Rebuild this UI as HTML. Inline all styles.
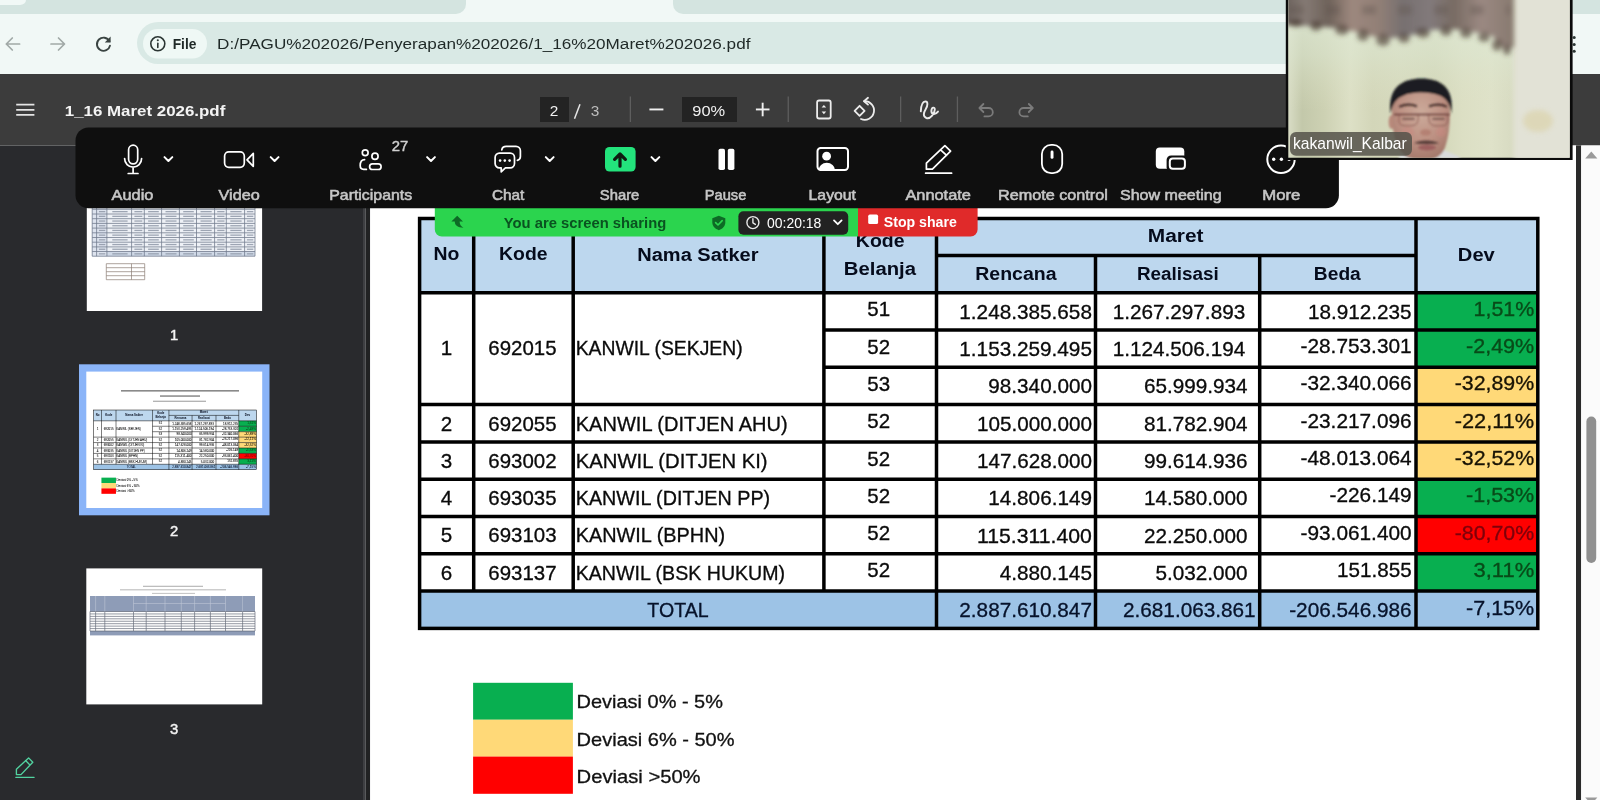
<!DOCTYPE html><html><head><meta charset="utf-8"><title>1_16 Maret 2026.pdf</title><style>html,body{margin:0;padding:0;background:#fff;overflow:hidden}svg{display:block;will-change:transform}text{font-family:"Liberation Sans", sans-serif;white-space:pre}</style></head><body>
<svg width="1600" height="800" viewBox="0 0 1600 800" font-family='"Liberation Sans", sans-serif'>
<defs><g id="tbl">
<rect x="419.6" y="218.5" width="1118.1999999999998" height="74.19999999999999" fill="#bdd7ee"/>
<rect x="419.6" y="591.0999999999999" width="1118.1999999999998" height="37.30000000000007" fill="#9dc3e6"/>
<rect x="1416.0" y="292.70" width="121.79999999999995" height="37.3" fill="#08af50"/>
<rect x="1416.0" y="330.00" width="121.79999999999995" height="37.3" fill="#08af50"/>
<rect x="1416.0" y="367.30" width="121.79999999999995" height="37.3" fill="#ffd978"/>
<rect x="1416.0" y="404.60" width="121.79999999999995" height="37.3" fill="#ffd978"/>
<rect x="1416.0" y="441.90" width="121.79999999999995" height="37.3" fill="#ffd978"/>
<rect x="1416.0" y="479.20" width="121.79999999999995" height="37.3" fill="#08af50"/>
<rect x="1416.0" y="516.50" width="121.79999999999995" height="37.3" fill="#ff0000"/>
<rect x="1416.0" y="553.80" width="121.79999999999995" height="37.3" fill="#08af50"/>
<g stroke="#000" stroke-width="3.5" stroke-linecap="butt" fill="none"><rect x="419.6" y="218.5" width="1118.1999999999998" height="409.90"/><path d="M419.6,292.7 H1537.8"/><path d="M936.5,255.4 H1416.0"/><path d="M473.7,218.5 V292.7"/><path d="M573.2,218.5 V292.7"/><path d="M823.9,218.5 V292.7"/><path d="M936.5,218.5 V292.7"/><path d="M1416.0,218.5 V292.7"/><path d="M1095.5,255.4 V292.7"/><path d="M1259.7,255.4 V292.7"/><path d="M473.7,292.7 V591.10"/><path d="M573.2,292.7 V591.10"/><path d="M823.9,292.7 V591.10"/><path d="M936.5,292.7 V628.40"/><path d="M1095.5,292.7 V628.40"/><path d="M1259.7,292.7 V628.40"/><path d="M1416.0,292.7 V628.40"/><path d="M823.9,330.00 H1537.8"/><path d="M823.9,367.30 H1537.8"/><path d="M419.6,404.60 H1537.8"/><path d="M419.6,441.90 H1537.8"/><path d="M419.6,479.20 H1537.8"/><path d="M419.6,516.50 H1537.8"/><path d="M419.6,553.80 H1537.8"/><path d="M419.6,591.10 H1537.8"/></g>
<text x="433.48" y="260.40" font-size="18.8" font-weight="bold" fill="#050b1c" textLength="25.88" lengthAdjust="spacingAndGlyphs">No</text>
<text x="499.08" y="260.40" font-size="18.8" font-weight="bold" fill="#050b1c" textLength="48.48" lengthAdjust="spacingAndGlyphs">Kode</text>
<text x="637.28" y="260.50" font-size="18.8" font-weight="bold" fill="#050b1c" textLength="121.28" lengthAdjust="spacingAndGlyphs">Nama Satker</text>
<text x="855.88" y="246.70" font-size="18.8" font-weight="bold" fill="#050b1c" textLength="48.68" lengthAdjust="spacingAndGlyphs">Kode</text>
<text x="843.88" y="274.60" font-size="18.8" font-weight="bold" fill="#050b1c" textLength="72.08" lengthAdjust="spacingAndGlyphs">Belanja</text>
<text x="1147.88" y="242.10" font-size="18.8" font-weight="bold" fill="#050b1c" textLength="55.68" lengthAdjust="spacingAndGlyphs">Maret</text>
<text x="975.28" y="280.00" font-size="18.8" font-weight="bold" fill="#050b1c" textLength="81.28" lengthAdjust="spacingAndGlyphs">Rencana</text>
<text x="1136.88" y="280.00" font-size="18.8" font-weight="bold" fill="#050b1c" textLength="81.88" lengthAdjust="spacingAndGlyphs">Realisasi</text>
<text x="1313.88" y="280.00" font-size="18.8" font-weight="bold" fill="#050b1c" textLength="46.88" lengthAdjust="spacingAndGlyphs">Beda</text>
<text x="1457.88" y="260.50" font-size="18.8" font-weight="bold" fill="#050b1c" textLength="36.88" lengthAdjust="spacingAndGlyphs">Dev</text>
<text x="440.65" y="355.00" font-size="21.0" font-weight="normal" fill="#0a0a0a" textLength="11.46" lengthAdjust="spacingAndGlyphs" stroke="#0a0a0a" stroke-width="0.32" paint-order="stroke">1</text>
<text x="488.35" y="355.00" font-size="21.0" font-weight="normal" fill="#0a0a0a" textLength="68.26" lengthAdjust="spacingAndGlyphs" stroke="#0a0a0a" stroke-width="0.32" paint-order="stroke">692015</text>
<text x="575.73" y="355.00" font-size="21.0" font-weight="normal" fill="#0a0a0a" textLength="166.90" lengthAdjust="spacingAndGlyphs" stroke="#0a0a0a" stroke-width="0.32" paint-order="stroke">KANWIL (SEKJEN)</text>
<text x="440.65" y="430.50" font-size="21.0" font-weight="normal" fill="#0a0a0a" textLength="11.46" lengthAdjust="spacingAndGlyphs" stroke="#0a0a0a" stroke-width="0.32" paint-order="stroke">2</text>
<text x="488.35" y="430.50" font-size="21.0" font-weight="normal" fill="#0a0a0a" textLength="68.26" lengthAdjust="spacingAndGlyphs" stroke="#0a0a0a" stroke-width="0.32" paint-order="stroke">692055</text>
<text x="575.73" y="430.50" font-size="21.0" font-weight="normal" fill="#0a0a0a" textLength="211.90" lengthAdjust="spacingAndGlyphs" stroke="#0a0a0a" stroke-width="0.32" paint-order="stroke">KANWIL (DITJEN AHU)</text>
<text x="440.65" y="467.80" font-size="21.0" font-weight="normal" fill="#0a0a0a" textLength="11.46" lengthAdjust="spacingAndGlyphs" stroke="#0a0a0a" stroke-width="0.32" paint-order="stroke">3</text>
<text x="488.35" y="467.80" font-size="21.0" font-weight="normal" fill="#0a0a0a" textLength="68.26" lengthAdjust="spacingAndGlyphs" stroke="#0a0a0a" stroke-width="0.32" paint-order="stroke">693002</text>
<text x="575.73" y="467.80" font-size="21.0" font-weight="normal" fill="#0a0a0a" textLength="191.90" lengthAdjust="spacingAndGlyphs" stroke="#0a0a0a" stroke-width="0.32" paint-order="stroke">KANWIL (DITJEN KI)</text>
<text x="440.65" y="505.10" font-size="21.0" font-weight="normal" fill="#0a0a0a" textLength="11.46" lengthAdjust="spacingAndGlyphs" stroke="#0a0a0a" stroke-width="0.32" paint-order="stroke">4</text>
<text x="488.35" y="505.10" font-size="21.0" font-weight="normal" fill="#0a0a0a" textLength="68.26" lengthAdjust="spacingAndGlyphs" stroke="#0a0a0a" stroke-width="0.32" paint-order="stroke">693035</text>
<text x="575.73" y="505.10" font-size="21.0" font-weight="normal" fill="#0a0a0a" textLength="194.40" lengthAdjust="spacingAndGlyphs" stroke="#0a0a0a" stroke-width="0.32" paint-order="stroke">KANWIL (DITJEN PP)</text>
<text x="440.65" y="542.40" font-size="21.0" font-weight="normal" fill="#0a0a0a" textLength="11.46" lengthAdjust="spacingAndGlyphs" stroke="#0a0a0a" stroke-width="0.32" paint-order="stroke">5</text>
<text x="488.35" y="542.40" font-size="21.0" font-weight="normal" fill="#0a0a0a" textLength="68.26" lengthAdjust="spacingAndGlyphs" stroke="#0a0a0a" stroke-width="0.32" paint-order="stroke">693103</text>
<text x="575.73" y="542.40" font-size="21.0" font-weight="normal" fill="#0a0a0a" textLength="149.40" lengthAdjust="spacingAndGlyphs" stroke="#0a0a0a" stroke-width="0.32" paint-order="stroke">KANWIL (BPHN)</text>
<text x="440.65" y="579.70" font-size="21.0" font-weight="normal" fill="#0a0a0a" textLength="11.46" lengthAdjust="spacingAndGlyphs" stroke="#0a0a0a" stroke-width="0.32" paint-order="stroke">6</text>
<text x="488.35" y="579.70" font-size="21.0" font-weight="normal" fill="#0a0a0a" textLength="68.26" lengthAdjust="spacingAndGlyphs" stroke="#0a0a0a" stroke-width="0.32" paint-order="stroke">693137</text>
<text x="575.73" y="579.70" font-size="21.0" font-weight="normal" fill="#0a0a0a" textLength="209.40" lengthAdjust="spacingAndGlyphs" stroke="#0a0a0a" stroke-width="0.32" paint-order="stroke">KANWIL (BSK HUKUM)</text>
<text x="647.33" y="617.10" font-size="21.0" font-weight="normal" fill="#06122a" textLength="61.30" lengthAdjust="spacingAndGlyphs" stroke="#06122a" stroke-width="0.32" paint-order="stroke">TOTAL</text>
<text x="867.37" y="316.30" font-size="21.0" font-weight="normal" fill="#0a0a0a" textLength="22.82" lengthAdjust="spacingAndGlyphs" stroke="#0a0a0a" stroke-width="0.32" paint-order="stroke">51</text>
<text x="959.33" y="318.70" font-size="21.0" font-weight="normal" fill="#0a0a0a" textLength="132.60" lengthAdjust="spacingAndGlyphs" stroke="#0a0a0a" stroke-width="0.32" paint-order="stroke">1.248.385.658</text>
<text x="1112.63" y="318.70" font-size="21.0" font-weight="normal" fill="#0a0a0a" textLength="132.60" lengthAdjust="spacingAndGlyphs" stroke="#0a0a0a" stroke-width="0.32" paint-order="stroke">1.267.297.893</text>
<text x="1308.05" y="318.50" font-size="21.0" font-weight="normal" fill="#0a0a0a" textLength="103.58" lengthAdjust="spacingAndGlyphs" stroke="#0a0a0a" stroke-width="0.32" paint-order="stroke">18.912.235</text>
<text x="1473.55" y="316.10" font-size="21.0" font-weight="normal" fill="#084a18" textLength="60.68" lengthAdjust="spacingAndGlyphs" stroke="#084a18" stroke-width="0.32" paint-order="stroke">1,51%</text>
<text x="867.37" y="353.60" font-size="21.0" font-weight="normal" fill="#0a0a0a" textLength="22.82" lengthAdjust="spacingAndGlyphs" stroke="#0a0a0a" stroke-width="0.32" paint-order="stroke">52</text>
<text x="959.33" y="356.00" font-size="21.0" font-weight="normal" fill="#0a0a0a" textLength="132.60" lengthAdjust="spacingAndGlyphs" stroke="#0a0a0a" stroke-width="0.32" paint-order="stroke">1.153.259.495</text>
<text x="1112.63" y="356.00" font-size="21.0" font-weight="normal" fill="#0a0a0a" textLength="132.60" lengthAdjust="spacingAndGlyphs" stroke="#0a0a0a" stroke-width="0.32" paint-order="stroke">1.124.506.194</text>
<text x="1300.55" y="353.10" font-size="21.0" font-weight="normal" fill="#0a0a0a" textLength="111.08" lengthAdjust="spacingAndGlyphs" stroke="#0a0a0a" stroke-width="0.32" paint-order="stroke">-28.753.301</text>
<text x="1466.05" y="353.10" font-size="21.0" font-weight="normal" fill="#084a18" textLength="68.18" lengthAdjust="spacingAndGlyphs" stroke="#084a18" stroke-width="0.32" paint-order="stroke">-2,49%</text>
<text x="867.37" y="390.90" font-size="21.0" font-weight="normal" fill="#0a0a0a" textLength="22.82" lengthAdjust="spacingAndGlyphs" stroke="#0a0a0a" stroke-width="0.32" paint-order="stroke">53</text>
<text x="988.35" y="393.30" font-size="21.0" font-weight="normal" fill="#0a0a0a" textLength="103.58" lengthAdjust="spacingAndGlyphs" stroke="#0a0a0a" stroke-width="0.32" paint-order="stroke">98.340.000</text>
<text x="1144.05" y="393.30" font-size="21.0" font-weight="normal" fill="#0a0a0a" textLength="103.58" lengthAdjust="spacingAndGlyphs" stroke="#0a0a0a" stroke-width="0.32" paint-order="stroke">65.999.934</text>
<text x="1300.55" y="390.40" font-size="21.0" font-weight="normal" fill="#0a0a0a" textLength="111.08" lengthAdjust="spacingAndGlyphs" stroke="#0a0a0a" stroke-width="0.32" paint-order="stroke">-32.340.066</text>
<text x="1454.69" y="390.40" font-size="21.0" font-weight="normal" fill="#171204" textLength="79.54" lengthAdjust="spacingAndGlyphs" stroke="#171204" stroke-width="0.32" paint-order="stroke">-32,89%</text>
<text x="867.37" y="428.20" font-size="21.0" font-weight="normal" fill="#0a0a0a" textLength="22.82" lengthAdjust="spacingAndGlyphs" stroke="#0a0a0a" stroke-width="0.32" paint-order="stroke">52</text>
<text x="976.99" y="430.60" font-size="21.0" font-weight="normal" fill="#0a0a0a" textLength="114.94" lengthAdjust="spacingAndGlyphs" stroke="#0a0a0a" stroke-width="0.32" paint-order="stroke">105.000.000</text>
<text x="1144.05" y="430.60" font-size="21.0" font-weight="normal" fill="#0a0a0a" textLength="103.58" lengthAdjust="spacingAndGlyphs" stroke="#0a0a0a" stroke-width="0.32" paint-order="stroke">81.782.904</text>
<text x="1300.55" y="427.70" font-size="21.0" font-weight="normal" fill="#0a0a0a" textLength="111.08" lengthAdjust="spacingAndGlyphs" stroke="#0a0a0a" stroke-width="0.32" paint-order="stroke">-23.217.096</text>
<text x="1454.69" y="427.70" font-size="21.0" font-weight="normal" fill="#171204" textLength="79.54" lengthAdjust="spacingAndGlyphs" stroke="#171204" stroke-width="0.32" paint-order="stroke">-22,11%</text>
<text x="867.37" y="465.50" font-size="21.0" font-weight="normal" fill="#0a0a0a" textLength="22.82" lengthAdjust="spacingAndGlyphs" stroke="#0a0a0a" stroke-width="0.32" paint-order="stroke">52</text>
<text x="976.99" y="467.90" font-size="21.0" font-weight="normal" fill="#0a0a0a" textLength="114.94" lengthAdjust="spacingAndGlyphs" stroke="#0a0a0a" stroke-width="0.32" paint-order="stroke">147.628.000</text>
<text x="1144.05" y="467.90" font-size="21.0" font-weight="normal" fill="#0a0a0a" textLength="103.58" lengthAdjust="spacingAndGlyphs" stroke="#0a0a0a" stroke-width="0.32" paint-order="stroke">99.614.936</text>
<text x="1300.55" y="465.00" font-size="21.0" font-weight="normal" fill="#0a0a0a" textLength="111.08" lengthAdjust="spacingAndGlyphs" stroke="#0a0a0a" stroke-width="0.32" paint-order="stroke">-48.013.064</text>
<text x="1454.69" y="465.00" font-size="21.0" font-weight="normal" fill="#171204" textLength="79.54" lengthAdjust="spacingAndGlyphs" stroke="#171204" stroke-width="0.32" paint-order="stroke">-32,52%</text>
<text x="867.37" y="502.80" font-size="21.0" font-weight="normal" fill="#0a0a0a" textLength="22.82" lengthAdjust="spacingAndGlyphs" stroke="#0a0a0a" stroke-width="0.32" paint-order="stroke">52</text>
<text x="988.35" y="505.20" font-size="21.0" font-weight="normal" fill="#0a0a0a" textLength="103.58" lengthAdjust="spacingAndGlyphs" stroke="#0a0a0a" stroke-width="0.32" paint-order="stroke">14.806.149</text>
<text x="1144.05" y="505.20" font-size="21.0" font-weight="normal" fill="#0a0a0a" textLength="103.58" lengthAdjust="spacingAndGlyphs" stroke="#0a0a0a" stroke-width="0.32" paint-order="stroke">14.580.000</text>
<text x="1329.57" y="502.30" font-size="21.0" font-weight="normal" fill="#0a0a0a" textLength="82.06" lengthAdjust="spacingAndGlyphs" stroke="#0a0a0a" stroke-width="0.32" paint-order="stroke">-226.149</text>
<text x="1466.05" y="502.30" font-size="21.0" font-weight="normal" fill="#084a18" textLength="68.18" lengthAdjust="spacingAndGlyphs" stroke="#084a18" stroke-width="0.32" paint-order="stroke">-1,53%</text>
<text x="867.37" y="540.10" font-size="21.0" font-weight="normal" fill="#0a0a0a" textLength="22.82" lengthAdjust="spacingAndGlyphs" stroke="#0a0a0a" stroke-width="0.32" paint-order="stroke">52</text>
<text x="976.99" y="542.50" font-size="21.0" font-weight="normal" fill="#0a0a0a" textLength="114.94" lengthAdjust="spacingAndGlyphs" stroke="#0a0a0a" stroke-width="0.32" paint-order="stroke">115.311.400</text>
<text x="1144.05" y="542.50" font-size="21.0" font-weight="normal" fill="#0a0a0a" textLength="103.58" lengthAdjust="spacingAndGlyphs" stroke="#0a0a0a" stroke-width="0.32" paint-order="stroke">22.250.000</text>
<text x="1300.55" y="539.60" font-size="21.0" font-weight="normal" fill="#0a0a0a" textLength="111.08" lengthAdjust="spacingAndGlyphs" stroke="#0a0a0a" stroke-width="0.32" paint-order="stroke">-93.061.400</text>
<text x="1454.69" y="539.60" font-size="21.0" font-weight="normal" fill="#7e000a" textLength="79.54" lengthAdjust="spacingAndGlyphs" stroke="#7e000a" stroke-width="0.32" paint-order="stroke">-80,70%</text>
<text x="867.37" y="577.40" font-size="21.0" font-weight="normal" fill="#0a0a0a" textLength="22.82" lengthAdjust="spacingAndGlyphs" stroke="#0a0a0a" stroke-width="0.32" paint-order="stroke">52</text>
<text x="999.71" y="579.80" font-size="21.0" font-weight="normal" fill="#0a0a0a" textLength="92.22" lengthAdjust="spacingAndGlyphs" stroke="#0a0a0a" stroke-width="0.32" paint-order="stroke">4.880.145</text>
<text x="1155.41" y="579.80" font-size="21.0" font-weight="normal" fill="#0a0a0a" textLength="92.22" lengthAdjust="spacingAndGlyphs" stroke="#0a0a0a" stroke-width="0.32" paint-order="stroke">5.032.000</text>
<text x="1337.07" y="576.90" font-size="21.0" font-weight="normal" fill="#0a0a0a" textLength="74.56" lengthAdjust="spacingAndGlyphs" stroke="#0a0a0a" stroke-width="0.32" paint-order="stroke">151.855</text>
<text x="1473.55" y="576.90" font-size="21.0" font-weight="normal" fill="#084a18" textLength="60.68" lengthAdjust="spacingAndGlyphs" stroke="#084a18" stroke-width="0.32" paint-order="stroke">3,11%</text>
<text x="959.33" y="617.30" font-size="21.0" font-weight="normal" fill="#06122a" textLength="132.60" lengthAdjust="spacingAndGlyphs" stroke="#06122a" stroke-width="0.32" paint-order="stroke">2.887.610.847</text>
<text x="1123.03" y="617.30" font-size="21.0" font-weight="normal" fill="#06122a" textLength="132.60" lengthAdjust="spacingAndGlyphs" stroke="#06122a" stroke-width="0.32" paint-order="stroke">2.681.063.861</text>
<text x="1289.19" y="617.30" font-size="21.0" font-weight="normal" fill="#06122a" textLength="122.44" lengthAdjust="spacingAndGlyphs" stroke="#06122a" stroke-width="0.32" paint-order="stroke">-206.546.986</text>
<text x="1466.05" y="614.50" font-size="21.0" font-weight="normal" fill="#06122a" textLength="68.18" lengthAdjust="spacingAndGlyphs" stroke="#06122a" stroke-width="0.32" paint-order="stroke">-7,15%</text>
<rect x="473.1" y="682.8" width="99.8" height="37" fill="#08af50"/>
<rect x="473.1" y="719.7" width="99.8" height="37" fill="#ffd978"/>
<rect x="473.1" y="756.6" width="99.8" height="37.2" fill="#ff0000"/>
<text x="576.63" y="708.40" font-size="18.2" font-weight="normal" fill="#111" textLength="146.32" lengthAdjust="spacingAndGlyphs" stroke="#111" stroke-width="0.3" paint-order="stroke">Deviasi 0% - 5%</text>
<text x="576.63" y="746.00" font-size="18.2" font-weight="normal" fill="#111" textLength="157.92" lengthAdjust="spacingAndGlyphs" stroke="#111" stroke-width="0.3" paint-order="stroke">Deviasi 6% - 50%</text>
<text x="576.63" y="782.90" font-size="18.2" font-weight="normal" fill="#111" textLength="123.92" lengthAdjust="spacingAndGlyphs" stroke="#111" stroke-width="0.3" paint-order="stroke">Deviasi &gt;50%</text>
</g></defs>
<rect x="0" y="0" width="1600" height="800" fill="#fff"/>
<rect x="0" y="0" width="1600" height="74" fill="#f1f8f6"/>
<path d="M0,0 H466 V4 A10,10 0 0 1 456,14 H0 Z" fill="#d4e4e0"/>
<path d="M673,0 H1600 V14 H683 A10,10 0 0 1 673,4 Z" fill="#d4e4e0"/>
<path d="M0,0 H26 V0 A6,5 0 0 1 20,5 H0 Z" fill="#f1f8f6"/>
<rect x="137" y="22" width="1425" height="42" rx="21" fill="#d9e9e5"/>
<rect x="143" y="29" width="64" height="29.5" rx="14.7" fill="#eff8f5"/>
<g fill="none" stroke="#2b3533" stroke-width="1.6" stroke-linecap="round"><circle cx="157.8" cy="43.8" r="7"/><path d="M157.8,43.2 V47.4"/></g><circle cx="157.8" cy="40.3" r="1.05" fill="#2b3533"/>
<text x="172.68" y="48.90" font-size="14.6" font-weight="bold" fill="#1f2927" textLength="23.76" lengthAdjust="spacingAndGlyphs">File</text>
<text x="217.12" y="49.00" font-size="15.4" font-weight="normal" fill="#1f2927" textLength="533.34" lengthAdjust="spacingAndGlyphs">D:/PAGU%202026/Penyerapan%202026/1_16%20Maret%202026.pdf</text>
<g fill="#2b3533"><circle cx="1574.2" cy="37.6" r="1.5"/><circle cx="1574.2" cy="44.5" r="1.5"/><circle cx="1574.2" cy="51.3" r="1.5"/></g>
<g fill="none" stroke="#a1a9a7" stroke-width="1.7" stroke-linecap="round" stroke-linejoin="round"><path d="M19.6,44 H6.4 M12.3,38 L6.3,44 L12.3,50"/><path d="M51,44 H64.4 M58.5,38 L64.5,44 L58.5,50"/></g>
<g fill="none" stroke="#3a4442" stroke-width="1.9" stroke-linecap="round" stroke-linejoin="round"><path d="M109.4,41.2 A6.6,6.6 0 1 0 110,45.6"/></g><path d="M110.6,36.6 V42.4 H104.8 Z" fill="#3a4442"/>
<rect x="0" y="74" width="1600" height="71.5" fill="#3c3c3c"/>
<g stroke="#e4e4e4" stroke-width="1.7"><path d="M16.2,104.6 H34.4 M16.2,109.8 H34.4 M16.2,114.8 H34.4"/></g>
<text x="64.74" y="116.30" font-size="15.2" font-weight="bold" fill="#f4f4f4" textLength="160.52" lengthAdjust="spacingAndGlyphs">1_16 Maret 2026.pdf</text>
<rect x="540" y="97" width="29" height="25" fill="#232323"/>
<text x="554.00" y="116.00" font-size="15.4" font-weight="normal" fill="#f1f1f1" text-anchor="middle">2</text>
<path d="M574.5,118.8 L580,104.2" stroke="#e6e6e6" stroke-width="1.5" fill="none"/>
<text x="595.00" y="116.00" font-size="15.4" font-weight="normal" fill="#bdbdbd" text-anchor="middle">3</text>
<rect x="629.6999999999999" y="96.5" width="1.3" height="25.5" fill="#5e5e5e"/>
<rect x="787.6" y="96.5" width="1.3" height="25.5" fill="#5e5e5e"/>
<rect x="900.0" y="96.5" width="1.3" height="25.5" fill="#5e5e5e"/>
<rect x="956.8" y="96.5" width="1.3" height="25.5" fill="#5e5e5e"/>
<rect x="649.4" y="108.5" width="14" height="1.9" fill="#efefef"/>
<rect x="682" y="97" width="55" height="25" fill="#232323"/>
<text x="692.35" y="116.00" font-size="15" font-weight="normal" fill="#f1f1f1" textLength="32.90" lengthAdjust="spacingAndGlyphs">90%</text>
<rect x="755.9" y="108.5" width="13.6" height="1.9" fill="#efefef"/><rect x="761.7" y="102.7" width="1.9" height="13.6" fill="#efefef"/>
<g fill="none" stroke="#ececec" stroke-width="1.8" stroke-linejoin="round"><rect x="817.1" y="100.5" width="13.6" height="18" rx="2"/></g><path d="M821.6,107.6 L823.9,105 L826.2,107.6 Z M821.6,111.6 L823.9,114.2 L826.2,111.6 Z" fill="#ececec"/>
<g fill="none" stroke="#ececec" stroke-width="1.8" stroke-linejoin="round" stroke-linecap="round"><path d="M854.6,110.8 L859.6,105.8 L864.6,110.8 L859.6,115.8 Z"/><path d="M864.2,101.2 A9.3,9.3 0 1 1 861,119"/><path d="M868,97.8 L864,101.2 L868,104.6"/></g>
<path d="M920.8,111.4 C921,106 922.6,101.6 925.4,101.4 C928.2,101.4 927.8,105.6 925.8,109 C923.6,112.6 922.6,116.6 926.4,118 C930.6,119.4 934.6,112.8 934.8,109.6 C935,106.8 931.8,107 931.4,110.4 C931,113.8 934.4,116 938,111.6" fill="none" stroke="#ececec" stroke-width="1.9" stroke-linecap="round"/>
<g fill="none" stroke="#7b7b7b" stroke-width="1.8" stroke-linejoin="round" stroke-linecap="round"><path d="M983.4,104 L979.4,108 L983.4,112 M979.6,108 H988.6 A4.2,4.2 0 0 1 988.6,116.4 H984.4"/><path d="M1028.8,104 L1032.8,108 L1028.8,112 M1032.6,108 H1023.6 A4.2,4.2 0 0 0 1023.6,116.4 H1027.8"/></g>
<rect x="0" y="145.5" width="363" height="655" fill="#292a2d"/>
<rect x="363" y="145.5" width="2.4" height="655" fill="#3e3f42"/>
<rect x="365.4" y="145.5" width="4.8" height="655" fill="#212223"/>
<rect x="86.8" y="170" width="175.3" height="141" fill="#fff"/>
<rect x="92.2" y="200" width="162.8" height="56.2" fill="#eef1f6"/>
<rect x="92.2" y="251.5" width="162.8" height="4.7" fill="#cfd8e6"/>
<rect x="92.2" y="200" width="14.7" height="56.2" fill="#dde3ee"/>
<g fill="#8a93a3" opacity="0.8"><rect x="98.9" y="211.0" width="6.4" height="1.3"/><rect x="112.3" y="211.0" width="15.3" height="1.3"/><rect x="134.4" y="211.0" width="7.9" height="1.3"/><rect x="148.1" y="211.0" width="10.7" height="1.3"/><rect x="165.5" y="211.0" width="11.0" height="1.3"/><rect x="183.2" y="211.0" width="10.6" height="1.3"/><rect x="200.5" y="211.0" width="11.2" height="1.3"/><rect x="217.2" y="211.0" width="7.3" height="1.3"/><rect x="230.3" y="211.0" width="11.3" height="1.3"/><rect x="246.9" y="211.0" width="6.4" height="1.3"/><rect x="98.9" y="215.7" width="6.4" height="1.3"/><rect x="112.3" y="215.7" width="15.3" height="1.3"/><rect x="134.4" y="215.7" width="7.9" height="1.3"/><rect x="148.1" y="215.7" width="10.7" height="1.3"/><rect x="165.5" y="215.7" width="11.0" height="1.3"/><rect x="183.2" y="215.7" width="10.6" height="1.3"/><rect x="200.5" y="215.7" width="11.2" height="1.3"/><rect x="217.2" y="215.7" width="7.3" height="1.3"/><rect x="230.3" y="215.7" width="11.3" height="1.3"/><rect x="246.9" y="215.7" width="6.4" height="1.3"/><rect x="98.9" y="220.4" width="6.4" height="1.3"/><rect x="112.3" y="220.4" width="15.3" height="1.3"/><rect x="134.4" y="220.4" width="7.9" height="1.3"/><rect x="148.1" y="220.4" width="10.7" height="1.3"/><rect x="165.5" y="220.4" width="11.0" height="1.3"/><rect x="183.2" y="220.4" width="10.6" height="1.3"/><rect x="200.5" y="220.4" width="11.2" height="1.3"/><rect x="217.2" y="220.4" width="7.3" height="1.3"/><rect x="230.3" y="220.4" width="11.3" height="1.3"/><rect x="246.9" y="220.4" width="6.4" height="1.3"/><rect x="98.9" y="225.1" width="6.4" height="1.3"/><rect x="112.3" y="225.1" width="15.3" height="1.3"/><rect x="134.4" y="225.1" width="7.9" height="1.3"/><rect x="148.1" y="225.1" width="10.7" height="1.3"/><rect x="165.5" y="225.1" width="11.0" height="1.3"/><rect x="183.2" y="225.1" width="10.6" height="1.3"/><rect x="200.5" y="225.1" width="11.2" height="1.3"/><rect x="217.2" y="225.1" width="7.3" height="1.3"/><rect x="230.3" y="225.1" width="11.3" height="1.3"/><rect x="246.9" y="225.1" width="6.4" height="1.3"/><rect x="98.9" y="229.8" width="6.4" height="1.3"/><rect x="112.3" y="229.8" width="15.3" height="1.3"/><rect x="134.4" y="229.8" width="7.9" height="1.3"/><rect x="148.1" y="229.8" width="10.7" height="1.3"/><rect x="165.5" y="229.8" width="11.0" height="1.3"/><rect x="183.2" y="229.8" width="10.6" height="1.3"/><rect x="200.5" y="229.8" width="11.2" height="1.3"/><rect x="217.2" y="229.8" width="7.3" height="1.3"/><rect x="230.3" y="229.8" width="11.3" height="1.3"/><rect x="246.9" y="229.8" width="6.4" height="1.3"/><rect x="98.9" y="234.5" width="6.4" height="1.3"/><rect x="112.3" y="234.5" width="15.3" height="1.3"/><rect x="134.4" y="234.5" width="7.9" height="1.3"/><rect x="148.1" y="234.5" width="10.7" height="1.3"/><rect x="165.5" y="234.5" width="11.0" height="1.3"/><rect x="183.2" y="234.5" width="10.6" height="1.3"/><rect x="200.5" y="234.5" width="11.2" height="1.3"/><rect x="217.2" y="234.5" width="7.3" height="1.3"/><rect x="230.3" y="234.5" width="11.3" height="1.3"/><rect x="246.9" y="234.5" width="6.4" height="1.3"/><rect x="98.9" y="239.2" width="6.4" height="1.3"/><rect x="112.3" y="239.2" width="15.3" height="1.3"/><rect x="134.4" y="239.2" width="7.9" height="1.3"/><rect x="148.1" y="239.2" width="10.7" height="1.3"/><rect x="165.5" y="239.2" width="11.0" height="1.3"/><rect x="183.2" y="239.2" width="10.6" height="1.3"/><rect x="200.5" y="239.2" width="11.2" height="1.3"/><rect x="217.2" y="239.2" width="7.3" height="1.3"/><rect x="230.3" y="239.2" width="11.3" height="1.3"/><rect x="246.9" y="239.2" width="6.4" height="1.3"/><rect x="98.9" y="243.9" width="6.4" height="1.3"/><rect x="112.3" y="243.9" width="15.3" height="1.3"/><rect x="134.4" y="243.9" width="7.9" height="1.3"/><rect x="148.1" y="243.9" width="10.7" height="1.3"/><rect x="165.5" y="243.9" width="11.0" height="1.3"/><rect x="183.2" y="243.9" width="10.6" height="1.3"/><rect x="200.5" y="243.9" width="11.2" height="1.3"/><rect x="217.2" y="243.9" width="7.3" height="1.3"/><rect x="230.3" y="243.9" width="11.3" height="1.3"/><rect x="246.9" y="243.9" width="6.4" height="1.3"/><rect x="98.9" y="248.6" width="6.4" height="1.3"/><rect x="112.3" y="248.6" width="15.3" height="1.3"/><rect x="134.4" y="248.6" width="7.9" height="1.3"/><rect x="148.1" y="248.6" width="10.7" height="1.3"/><rect x="165.5" y="248.6" width="11.0" height="1.3"/><rect x="183.2" y="248.6" width="10.6" height="1.3"/><rect x="200.5" y="248.6" width="11.2" height="1.3"/><rect x="217.2" y="248.6" width="7.3" height="1.3"/><rect x="230.3" y="248.6" width="11.3" height="1.3"/><rect x="246.9" y="248.6" width="6.4" height="1.3"/><rect x="98.9" y="253.2" width="6.4" height="1.3"/><rect x="112.3" y="253.2" width="15.3" height="1.3"/><rect x="134.4" y="253.2" width="7.9" height="1.3"/><rect x="148.1" y="253.2" width="10.7" height="1.3"/><rect x="165.5" y="253.2" width="11.0" height="1.3"/><rect x="183.2" y="253.2" width="10.6" height="1.3"/><rect x="200.5" y="253.2" width="11.2" height="1.3"/><rect x="217.2" y="253.2" width="7.3" height="1.3"/><rect x="230.3" y="253.2" width="11.3" height="1.3"/><rect x="246.9" y="253.2" width="6.4" height="1.3"/></g>
<g stroke="#5f6a7d" stroke-width="0.8" opacity="0.85"><path d="M92.2,200 V256.2"/><path d="M96.6,200 V256.2"/><path d="M106.9,200 V256.2"/><path d="M131.6,200 V256.2"/><path d="M144.3,200 V256.2"/><path d="M161.6,200 V256.2"/><path d="M179.4,200 V256.2"/><path d="M196.5,200 V256.2"/><path d="M214.6,200 V256.2"/><path d="M226.3,200 V256.2"/><path d="M244.6,200 V256.2"/><path d="M255,200 V256.2"/><path d="M92.2,209.3 H255"/><path d="M92.2,214 H255"/><path d="M92.2,218.7 H255"/><path d="M92.2,223.4 H255"/><path d="M92.2,228.1 H255"/><path d="M92.2,232.8 H255"/><path d="M92.2,237.5 H255"/><path d="M92.2,242.2 H255"/><path d="M92.2,246.9 H255"/><path d="M92.2,251.5 H255"/><path d="M92.2,256.2 H255"/></g>
<g stroke="#8b7d74" stroke-width="0.7" fill="none"><path d="M106.3,263.7 H144.7 M106.3,267.7 H144.7 M106.3,271.7 H144.7 M106.3,275.7 H144.7 M106.3,279.7 H144.7 M106.3,263.7 V279.7 M131.5,263.7 V279.7 M144.7,263.7 V279.7"/></g>
<text x="174.00" y="339.60" font-size="14.8" font-weight="normal" fill="#f4f4f4" text-anchor="middle" stroke="#f4f4f4" stroke-width="0.45">1</text>
<rect x="79" y="364.3" width="190.5" height="151" fill="#8ab4f8"/>
<rect x="86.3" y="371.6" width="175.9" height="136.4" fill="#fff"/>
<g fill="#555"><rect x="121" y="390.2" width="118" height="1.3" opacity=".85"/><rect x="160" y="395.4" width="40" height="1.3" opacity=".8"/><rect x="153" y="400.7" width="53" height="1.1" opacity=".55"/></g>
<use href="#tbl" transform="translate(32.518,378.194) scale(0.14565)"/>
<text x="174.00" y="536.40" font-size="14.8" font-weight="normal" fill="#f4f4f4" text-anchor="middle" stroke="#f4f4f4" stroke-width="0.45">2</text>
<rect x="86.3" y="568.4" width="175.9" height="136" fill="#fff"/>
<g fill="#777"><rect x="143" y="585.8" width="60" height="0.9" opacity=".7"/><rect x="120" y="589.4" width="106" height="0.9" opacity=".6"/><rect x="152" y="592.9" width="43" height="0.9" opacity=".5"/></g>
<rect x="90" y="596" width="165" height="15.5" fill="#8e9cb7"/>
<rect x="90" y="631" width="165" height="4.4" fill="#8e9cb7"/>
<g stroke="#4e5564" stroke-width="0.7" opacity=".85"><path d="M90,611.5 V631"/><path d="M95.6,611.5 V631"/><path d="M104.8,611.5 V631"/><path d="M133.5,611.5 V631"/><path d="M146.2,611.5 V631"/><path d="M165,611.5 V631"/><path d="M181.3,611.5 V631"/><path d="M194.6,611.5 V631"/><path d="M210.4,611.5 V631"/><path d="M225.5,611.5 V631"/><path d="M242.6,611.5 V631"/><path d="M255,611.5 V631"/><path d="M90,611.50 H255"/><path d="M90,613.94 H255"/><path d="M90,616.38 H255"/><path d="M90,618.82 H255"/><path d="M90,621.26 H255"/><path d="M90,623.70 H255"/><path d="M90,626.14 H255"/><path d="M90,628.58 H255"/><path d="M90,631.02 H255"/></g><g stroke="#c9d0de" stroke-width="0.6" opacity=".8"><path d="M95.6,596 V611.5"/><path d="M104.8,596 V611.5"/><path d="M133.5,596 V611.5"/><path d="M146.2,596 V611.5"/><path d="M165,596 V611.5"/><path d="M181.3,596 V611.5"/><path d="M194.6,596 V611.5"/><path d="M210.4,596 V611.5"/><path d="M225.5,596 V611.5"/><path d="M242.6,596 V611.5"/><path d="M133.5,603.5 H225.5"/></g>
<text x="174.00" y="734.00" font-size="14.8" font-weight="normal" fill="#f4f4f4" text-anchor="middle" stroke="#f4f4f4" stroke-width="0.45">3</text>
<g fill="none" stroke="#52d3a0" stroke-width="1.35" stroke-linejoin="round" stroke-linecap="round"><path d="M16.4,774.6 V769.2 L28.6,757.9 L32.8,762.2 L21,774.6 Z M25.6,760.6 L30,765 M15.8,777.3 H34.1"/></g>
<rect x="370.2" y="145.5" width="1206" height="655" fill="#fff"/>
<rect x="1576" y="145.5" width="5.2" height="655" fill="#2a2a2a"/>
<rect x="1581.2" y="145.5" width="18.8" height="655" fill="#fbfbfb"/>
<path d="M1585.2,158.6 L1591.3,151.4 L1597.4,158.6 Z" fill="#9a9a9a"/>
<rect x="1586.4" y="416.5" width="9.8" height="146.5" rx="4.9" fill="#8f8f8f"/>
<path d="M1585.2,797.6 L1597.4,797.6 L1591.3,804 Z" fill="#9a9a9a"/>
<use href="#tbl"/>
<path d="M434.8,208 H858 V236.6 H441.8 A7,7 0 0 1 434.8,229.6 Z" fill="#2bd44e"/>
<path d="M858,208 H977.6 V229.6 A7,7 0 0 1 970.6,236.6 H858 Z" fill="#e02a2a"/>
<path d="M451.4,221.6 L457.2,215.8 L463,221.6 H459.6 C459.6,224.6 461,226.4 463.4,227.8 C458,227.8 454.8,225.6 454.8,221.6 Z" fill="#0d6a25"/>
<text x="503.79" y="227.70" font-size="14.4" font-weight="bold" fill="#0a5220" textLength="162.44" lengthAdjust="spacingAndGlyphs">You are screen sharing</text>
<path d="M718.8,215.8 L725.3,218.2 V222.6 C725.3,226.4 722.4,229 718.8,230.2 C715.2,229 712.3,226.4 712.3,222.6 V218.2 Z" fill="#0d6a25"/><path d="M715.6,222.6 L718,225 L722.2,220.6" fill="none" stroke="#2bd44e" stroke-width="1.6" stroke-linecap="round" stroke-linejoin="round"/>
<rect x="738.4" y="211.2" width="109.8" height="23.5" rx="5" fill="#222"/>
<g fill="none" stroke="#e8e8e8" stroke-width="1.4" stroke-linecap="round" stroke-linejoin="round"><circle cx="752.9" cy="222.6" r="6"/><path d="M752.9,218.8 V222.8 L755.4,224.4"/></g>
<text x="766.98" y="227.70" font-size="14.6" font-weight="normal" fill="#fff" textLength="54.36" lengthAdjust="spacingAndGlyphs">00:20:18</text>
<path d="M834,220.4 L837.8,224.2 L841.6,220.4" fill="none" stroke="#fff" stroke-width="1.8" stroke-linecap="round" stroke-linejoin="round"/>
<rect x="868.2" y="214.6" width="9.9" height="9.5" rx="1.6" fill="#fff"/>
<text x="883.81" y="227.30" font-size="14.2" font-weight="bold" fill="#fff" textLength="73.02" lengthAdjust="spacingAndGlyphs">Stop share</text>
<rect x="75.5" y="127.4" width="1263.4" height="80.8" rx="13" fill="#0f0f0f"/>
<g fill="none" stroke="#fff" stroke-width="1.7" stroke-linecap="round"><rect x="128.6" y="145.2" width="9.1" height="18.7" rx="4.55"/><path d="M124.6,158.6 A8.5,8.6 0 0 0 141.6,158.6 M133.1,167.3 V173.4 M128.2,173.5 H138"/></g>
<path d="M164.5,157.1 L168.4,161 L172.3,157.1" fill="none" stroke="#fff" stroke-width="2" stroke-linecap="round" stroke-linejoin="round"/>
<g fill="none" stroke="#fff" stroke-width="1.7" stroke-linejoin="round"><rect x="224.6" y="151.9" width="19.7" height="15.4" rx="4.2"/><path d="M247,159.8 L253.3,153.4 V166.3 Z"/></g>
<path d="M270.7,157.1 L274.6,161 L278.5,157.1" fill="none" stroke="#fff" stroke-width="2" stroke-linecap="round" stroke-linejoin="round"/>
<g fill="none" stroke="#fff" stroke-width="1.7" stroke-linecap="round"><circle cx="365.2" cy="152.8" r="2.9"/><circle cx="375" cy="156.3" r="3.1"/><rect x="369.6" y="163.9" width="11.5" height="5.6" rx="2.8"/><path d="M364.6,159.6 C360.6,159.6 360.2,162.8 360.2,165.6 C360.2,168.4 361.4,169.4 363.6,169.4 H366.4"/></g>
<text x="391.82" y="150.60" font-size="14.0" font-weight="normal" fill="#d0d0d0" textLength="16.50" lengthAdjust="spacingAndGlyphs" stroke="#d0d0d0" stroke-width="0.4" paint-order="stroke">27</text>
<path d="M427.1,157.1 L431.0,161 L434.9,157.1" fill="none" stroke="#fff" stroke-width="2" stroke-linecap="round" stroke-linejoin="round"/>
<g fill="none" stroke="#fff" stroke-width="1.7" stroke-linecap="round" stroke-linejoin="round"><path d="M499.4,153.1 H510.2 A4.3,4.3 0 0 1 514.5,157.4 V163.6 A4.3,4.3 0 0 1 510.2,167.9 H505.4 L501.2,171.8 V167.9 H499.4 A4.3,4.3 0 0 1 495.1,163.6 V157.4 A4.3,4.3 0 0 1 499.4,153.1 Z"/><path d="M501.8,149.8 C502.2,147.2 503.8,146.4 506.2,146.4 H516 A4.4,4.4 0 0 1 520.4,150.8 V156.6 C520.4,158.8 519.4,160 517.4,160.4"/></g><g fill="#fff"><circle cx="500.1" cy="160.6" r="1.3"/><circle cx="504.8" cy="160.6" r="1.3"/><circle cx="509.6" cy="160.6" r="1.3"/></g>
<path d="M545.8,157.1 L549.7,161 L553.6,157.1" fill="none" stroke="#fff" stroke-width="2" stroke-linecap="round" stroke-linejoin="round"/>
<rect x="605" y="146.9" width="30.6" height="24.6" rx="4.5" fill="#23e37c"/><path d="M620,166.2 V155 M614.6,159.4 L620,154 L625.4,159.4" fill="none" stroke="#0f1a12" stroke-width="3.2" stroke-linecap="round" stroke-linejoin="round"/>
<path d="M651.5,157.1 L655.4,161 L659.3,157.1" fill="none" stroke="#fff" stroke-width="2" stroke-linecap="round" stroke-linejoin="round"/>
<rect x="718.5" y="148.8" width="6.5" height="21.2" rx="1.8" fill="#fff"/><rect x="727.8" y="148.8" width="6.6" height="21.2" rx="1.8" fill="#fff"/>
<rect x="817.5" y="147.9" width="30.5" height="22.1" rx="3.2" fill="none" stroke="#fff" stroke-width="2"/><circle cx="826.6" cy="156.2" r="4.4" fill="#fff"/><path d="M818.6,170 A8.2,7.2 0 0 1 835,170 Z" fill="#fff"/>
<g fill="none" stroke="#fff" stroke-width="1.7" stroke-linejoin="round" stroke-linecap="round"><path d="M926.4,169.2 V163.2 L944.9,145.6 L950.6,151.2 L932.4,169.2 Z M940.6,149.8 L946.6,155.4 M925.6,173.2 H951.6"/></g>
<rect x="1041.9" y="144.9" width="20.3" height="28.3" rx="9.2" fill="none" stroke="#fff" stroke-width="1.8"/><rect x="1050.6" y="150.6" width="2.9" height="8.2" rx="1.4" fill="#fff"/>
<rect x="1155.8" y="147.5" width="28.5" height="21.2" rx="4" fill="#fff"/><rect x="1166.6" y="155.4" width="21.4" height="16.4" rx="4.5" fill="#0f0f0f"/><rect x="1169.8" y="158.6" width="15.1" height="10.2" rx="3" fill="#0f0f0f" stroke="#fff" stroke-width="2"/>
<circle cx="1281" cy="159.3" r="13.7" fill="none" stroke="#fff" stroke-width="2"/><g fill="#fff"><circle cx="1273.7" cy="159.3" r="1.7"/><circle cx="1281.4" cy="159.3" r="1.7"/><circle cx="1289.1" cy="159.3" r="1.7"/></g>
<text x="111.61" y="200.00" font-size="14.2" font-weight="normal" fill="#c6c6c6" textLength="41.82" lengthAdjust="spacingAndGlyphs" stroke="#c6c6c6" stroke-width="0.55" paint-order="stroke">Audio</text>
<text x="218.51" y="200.00" font-size="14.2" font-weight="normal" fill="#c6c6c6" textLength="41.22" lengthAdjust="spacingAndGlyphs" stroke="#c6c6c6" stroke-width="0.55" paint-order="stroke">Video</text>
<text x="329.21" y="200.00" font-size="14.2" font-weight="normal" fill="#c6c6c6" textLength="83.02" lengthAdjust="spacingAndGlyphs" stroke="#c6c6c6" stroke-width="0.55" paint-order="stroke">Participants</text>
<text x="491.91" y="200.00" font-size="14.2" font-weight="normal" fill="#c6c6c6" textLength="32.42" lengthAdjust="spacingAndGlyphs" stroke="#c6c6c6" stroke-width="0.55" paint-order="stroke">Chat</text>
<text x="599.81" y="200.00" font-size="14.2" font-weight="normal" fill="#c6c6c6" textLength="39.52" lengthAdjust="spacingAndGlyphs" stroke="#c6c6c6" stroke-width="0.55" paint-order="stroke">Share</text>
<text x="704.81" y="200.00" font-size="14.2" font-weight="normal" fill="#c6c6c6" textLength="41.52" lengthAdjust="spacingAndGlyphs" stroke="#c6c6c6" stroke-width="0.55" paint-order="stroke">Pause</text>
<text x="808.61" y="200.00" font-size="14.2" font-weight="normal" fill="#c6c6c6" textLength="47.32" lengthAdjust="spacingAndGlyphs" stroke="#c6c6c6" stroke-width="0.55" paint-order="stroke">Layout</text>
<text x="905.41" y="200.00" font-size="14.2" font-weight="normal" fill="#c6c6c6" textLength="65.52" lengthAdjust="spacingAndGlyphs" stroke="#c6c6c6" stroke-width="0.55" paint-order="stroke">Annotate</text>
<text x="998.01" y="200.00" font-size="14.2" font-weight="normal" fill="#c6c6c6" textLength="109.82" lengthAdjust="spacingAndGlyphs" stroke="#c6c6c6" stroke-width="0.55" paint-order="stroke">Remote control</text>
<text x="1120.01" y="200.00" font-size="14.2" font-weight="normal" fill="#c6c6c6" textLength="101.62" lengthAdjust="spacingAndGlyphs" stroke="#c6c6c6" stroke-width="0.55" paint-order="stroke">Show meeting</text>
<text x="1262.21" y="200.00" font-size="14.2" font-weight="normal" fill="#c6c6c6" textLength="38.12" lengthAdjust="spacingAndGlyphs" stroke="#c6c6c6" stroke-width="0.55" paint-order="stroke">More</text>
<defs><linearGradient id="cur" x1="0" x2="1" y1="0" y2="0"><stop offset="0" stop-color="#d9ddc6"/><stop offset=".05" stop-color="#c3c8aa"/><stop offset=".13" stop-color="#cdd1b3"/><stop offset=".22" stop-color="#dde0c6"/><stop offset=".30" stop-color="#d3d6b9"/><stop offset=".40" stop-color="#d6d9bd"/><stop offset=".52" stop-color="#d2d6b8"/><stop offset=".62" stop-color="#dcdfc4"/><stop offset=".72" stop-color="#dfe2c9"/><stop offset=".79" stop-color="#d8dbc2"/><stop offset=".86" stop-color="#e2e2d2"/><stop offset="1" stop-color="#e3e3d7"/></linearGradient><linearGradient id="curv" x1="0" x2="0" y1="0" y2="1"><stop offset="0" stop-color="#dfe9d6" stop-opacity=".85"/><stop offset=".35" stop-color="#dce6d0" stop-opacity=".55"/><stop offset=".7" stop-color="#dce0c4" stop-opacity="0"/></linearGradient><linearGradient id="valg" x1="0" x2="1" y1="0" y2="0"><stop offset="0" stop-color="#665d58"/><stop offset=".10" stop-color="#857a74"/><stop offset=".20" stop-color="#6e625a"/><stop offset=".30" stop-color="#9d887e"/><stop offset=".42" stop-color="#917f76"/><stop offset=".52" stop-color="#777070"/><stop offset=".64" stop-color="#827a7b"/><stop offset=".74" stop-color="#786b63"/><stop offset=".86" stop-color="#9b8982"/><stop offset="1" stop-color="#87796f"/></linearGradient><radialGradient id="skin" cx=".5" cy=".35" r=".7"><stop offset="0" stop-color="#ccab9b"/><stop offset=".55" stop-color="#bd9183"/><stop offset="1" stop-color="#a07567"/></radialGradient><filter id="bl" x="-20%" y="-30%" width="140%" height="160%"><feGaussianBlur stdDeviation="2.4"/></filter><filter id="bl1" x="-20%" y="-20%" width="140%" height="140%"><feGaussianBlur stdDeviation="0.9"/></filter><filter id="bl2" x="-20%" y="-20%" width="140%" height="140%"><feGaussianBlur stdDeviation="1.6"/></filter><clipPath id="vc"><rect x="1288.3" y="0" width="281.4" height="157.8"/></clipPath></defs>
<rect x="1285.8" y="-2" width="286.8" height="162" fill="#0b0b0b"/>
<g clip-path="url(#vc)"><rect x="1288" y="0" width="282" height="158" fill="url(#cur)"/><rect x="1288" y="0" width="226" height="158" fill="url(#curv)"/><rect x="1514" y="-5" width="64" height="170" fill="#e2e2d6" filter="url(#bl)"/><ellipse cx="1538" cy="121" rx="15" ry="11" fill="#dcd4ae" opacity=".75" filter="url(#bl)"/><g filter="url(#bl)"><path d="M1282,-8 H1514 V47 L1506,49 L1499,45 L1493,36 L1474,32 L1452,29 L1432,30 L1412,35 L1392,38 L1376,37 L1358,32 L1336,28 L1312,26 L1282,25 Z" fill="url(#valg)"/><g fill="#46372e" opacity=".62"><ellipse cx="1296" cy="23" rx="7" ry="4"/><ellipse cx="1316" cy="26" rx="6" ry="5"/><ellipse cx="1342" cy="30" rx="7" ry="5"/><ellipse cx="1363" cy="35" rx="6" ry="6"/><ellipse cx="1383" cy="40" rx="7" ry="6"/><ellipse cx="1404" cy="38" rx="6" ry="5"/><ellipse cx="1423" cy="33" rx="7" ry="5"/><ellipse cx="1446" cy="31" rx="6" ry="5"/><ellipse cx="1466" cy="33" rx="6" ry="5"/><ellipse cx="1484" cy="37" rx="6" ry="5"/><ellipse cx="1497" cy="45" rx="5" ry="6"/><ellipse cx="1507" cy="50" rx="4" ry="5"/></g><path d="M1290,10 H1510" fill="none" stroke="#5e534c" stroke-width="9" opacity=".35" stroke-dasharray="14 22"/></g><g filter="url(#bl1)"><path d="M1398,160 L1402,151 C1412,148 1436,148 1446,151 L1458,156 L1462,160 Z" fill="#d9dbdb"/><ellipse cx="1391.6" cy="122" rx="3" ry="7" fill="#b98a7c"/><path d="M1392,112 C1392,96 1404,88 1421,88 C1438,88 1450,96 1450,112 C1450,128 1448,140 1444,150 C1440,157 1434,160 1424,160 C1412,160 1404,157 1400,150 C1394,140 1392,128 1392,112 Z" fill="url(#skin)"/><path d="M1390.6,114 C1387,86 1404,78.4 1421.4,78.4 C1439,78.4 1455,86 1451.4,114 C1450,104 1446,97 1438,95 C1430,91.6 1412,91.6 1404,95.4 C1396,98 1392.4,104 1390.6,114 Z" fill="#1d1e21"/></g><g filter="url(#bl1)" opacity=".9"><path d="M1400,106.4 C1405,104 1412,104 1416,106 M1430,106 C1435,104 1442,104 1446,106.4" fill="none" stroke="#3c2824" stroke-width="2.2" stroke-linecap="round"/><path d="M1394,114.6 H1449.6" stroke="#5d322e" stroke-width="1.5"/><path d="M1399,115 V121 C1399,125 1402,126 1408,126 C1414,126 1417.4,125 1418,120 L1418.4,115 M1428.6,115 L1429,120 C1429.6,125 1433,126 1439,126 C1445,126 1447.4,125 1447.6,121 V115" fill="none" stroke="#7a4a44" stroke-width="1" opacity=".8"/><path d="M1403,118.8 H1414 M1433,118.8 H1444" stroke="#4b2f2b" stroke-width="1.6" stroke-linecap="round" opacity=".8"/><ellipse cx="1425.6" cy="132.4" rx="5.4" ry="3.2" fill="#b07a6c" opacity=".85"/><ellipse cx="1408" cy="132" rx="6" ry="5" fill="#c98880" opacity=".5"/><ellipse cx="1441" cy="132" rx="5" ry="5" fill="#c98880" opacity=".5"/><path d="M1414,143 C1420,139.6 1432,139.6 1439,143 C1434,144.6 1420,144.6 1414,143 Z" fill="#4e3632"/><ellipse cx="1427" cy="147.6" rx="9" ry="2.8" fill="#9a5b5c"/></g></g>
<rect x="1290" y="132" width="122" height="23.8" rx="6" fill="#55534b" opacity=".86"/>
<text x="1293.07" y="148.90" font-size="16.2" font-weight="normal" fill="#fff" textLength="113.62" lengthAdjust="spacingAndGlyphs">kakanwil_Kalbar</text>
</svg></body></html>
